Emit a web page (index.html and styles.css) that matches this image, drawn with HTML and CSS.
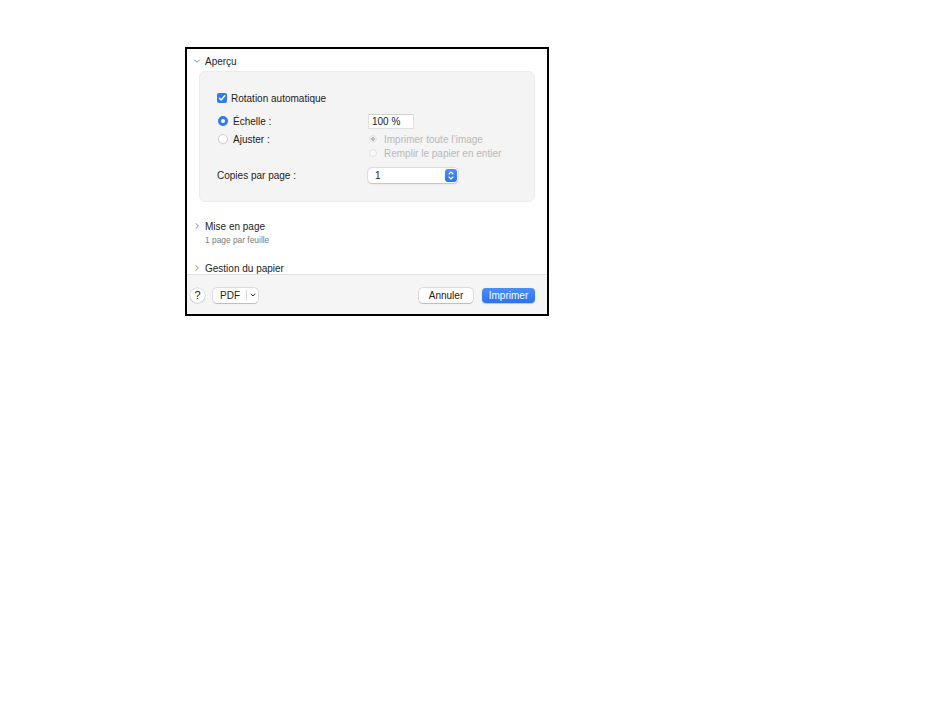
FILE: index.html
```html
<!DOCTYPE html>
<html lang="fr">
<head>
    <meta charset="UTF-8">
    <meta name="viewport" content="width=device-width, initial-scale=1.0">
    <title>Imprimer</title>
    <link rel="stylesheet" href="styles.css">
</head>
<body>
    <div class="dialog">
        <div class="options">
            <div class="section-head">
                <svg class="chevron" width="8" height="8" viewBox="0 0 8 8"><path d="M1.3 2.7 L4 5.4 L6.7 2.7" fill="none" stroke="#8a8a8a" stroke-width="1"/></svg>
                <span>Aperçu</span>
            </div>

            <div class="panel">
                <div class="row row-check">
                    <span class="checkbox">
                        <svg width="10" height="10" viewBox="0 0 10 10"><path d="M2.4 5.2 L4.2 7 L7.7 2.8" fill="none" stroke="#fff" stroke-width="1.5" stroke-linecap="round" stroke-linejoin="round"/></svg>
                    </span>
                    <span class="label">Rotation automatique</span>
                </div>

                <div class="row row-scale">
                    <div class="cell-left">
                        <span class="radio on"></span>
                        <span class="label">Échelle :</span>
                    </div>
                    <div class="field">100 %</div>
                </div>

                <div class="row row-fit">
                    <div class="cell-left">
                        <span class="radio"></span>
                        <span class="label">Ajuster :</span>
                    </div>
                    <div class="choices">
                        <div class="choice"><span class="mini-radio on"></span>Imprimer toute l’image</div>
                        <div class="choice"><span class="mini-radio"></span>Remplir le papier en entier</div>
                    </div>
                </div>

                <div class="row row-copies">
                    <div class="cell-left">
                        <span class="plain">Copies par page :</span>
                    </div>
                    <div class="select">
                        <span>1</span>
                        <span class="stepper">
                            <svg width="12" height="13" viewBox="0 0 12 13"><path d="M4 5 L6 3 L8 5 M4 8 L6 10 L8 8" fill="none" stroke="#fff" stroke-width="1.1" stroke-linecap="round" stroke-linejoin="round"/></svg>
                        </span>
                    </div>
                </div>
            </div>

            <div class="section-head collapsed">
                <svg class="chevron" width="8" height="8" viewBox="0 0 8 8"><path d="M2.7 1.3 L5.4 4 L2.7 6.7" fill="none" stroke="#8a8a8a" stroke-width="1"/></svg>
                <span>Mise en page</span>
            </div>
            <div class="section-sub">1 page par feuille</div>

            <div class="section-head collapsed last">
                <svg class="chevron" width="8" height="8" viewBox="0 0 8 8"><path d="M2.7 1.3 L5.4 4 L2.7 6.7" fill="none" stroke="#8a8a8a" stroke-width="1"/></svg>
                <span>Gestion du papier</span>
            </div>
        </div>

        <div class="footer">
            <button class="help">?</button>
            <button class="btn pdf">
                <span>PDF</span>
                <span class="divider"></span>
                <svg width="8" height="8" viewBox="0 0 8 8"><path d="M2 3 L4 5 L6 3" fill="none" stroke="#333" stroke-width="1" stroke-linecap="round"/></svg>
            </button>
            <span class="spacer"></span>
            <button class="btn">Annuler</button>
            <button class="btn primary">Imprimer</button>
        </div>
    </div>
</body>
</html>
```

FILE: styles.css
```css
/* Page */
body {
    margin: 0;
    background-color: #fff;
    font-family: 'Liberation Sans', Arial, sans-serif;
    font-size: 10px;
    color: #222;
}

/* Fenêtre d'impression (recadrée) */
.dialog {
    margin: 47px 0 0 185px;
    width: 360px;
    height: 265px;
    border: 2px solid #000;
    background-color: #fff;
    display: flex;
    flex-direction: column;
}

.options {
    flex: 1;
    overflow: hidden;
    padding-top: 5px;
}

/* En-têtes de section */
.section-head {
    display: flex;
    align-items: center;
    height: 14px;
    padding-left: 6px;
    font-size: 10px;
    color: #1d1d1d;
}

.section-head .chevron {
    margin-right: 4px;
}

.section-head.collapsed {
    margin-top: 17px;
}

.section-head.last {
    margin-top: 15px;
}

.section-sub {
    margin-top: 2px;
    padding-left: 18px;
    height: 11px;
    line-height: 11px;
    font-size: 8.4px;
    color: #7a7a7a;
}

/* Panneau gris */
.panel {
    margin: 3px 12px 0 12px;
    padding: 18px 0 18px 17px;
    background-color: #f4f4f4;
    border: 1px solid #ececec;
    border-radius: 6px;
}

.row {
    display: flex;
    align-items: center;
}

.row-check {
    height: 16px;
}

.row-scale {
    height: 16px;
    margin-top: 7px;
}

.row-fit {
    align-items: flex-start;
    margin-top: 3px;
}

.row-copies {
    height: 15px;
    margin-top: 8px;
}

.cell-left {
    width: 151px;
    display: flex;
    align-items: center;
    height: 14px;
}

.row-scale .cell-left,
.row-copies .cell-left {
    height: 16px;
}

.label {
    margin-left: 5px;
}

.row-check .label {
    margin-left: 4px;
}

/* Case à cocher */
.checkbox {
    width: 10px;
    height: 10px;
    border-radius: 2px;
    background-color: #2f7bf5;
    display: flex;
}

/* Boutons radio */
.radio {
    width: 10px;
    height: 10px;
    margin-left: 1px;
    border-radius: 50%;
    box-sizing: border-box;
    background-color: #fff;
    border: 1px solid #d4d4d4;
    box-shadow: 0 0.5px 1px rgba(0, 0, 0, 0.08);
}

.radio.on {
    border: 3px solid #2f7bf5;
    background-color: #fff;
}

.choices {
    display: flex;
    flex-direction: column;
}

.choice {
    display: flex;
    align-items: center;
    height: 14px;
    color: #b9b9b9;
}

.mini-radio {
    width: 8px;
    height: 8px;
    margin: 0 7px 0 1px;
    border-radius: 50%;
    box-sizing: border-box;
    background-color: #fafafa;
    border: 1px solid #e2e2e2;
}

.mini-radio.on {
    background: radial-gradient(circle, #bdbdbd 0 1.6px, #f2f2f2 2px);
}

/* Champ d'échelle */
.field {
    width: 46px;
    height: 15px;
    box-sizing: border-box;
    padding-left: 3px;
    line-height: 14px;
    background-color: #fff;
    border: 1px solid #e0e0e0;
    border-top-color: #d2d2d2;
}

/* Menu local */
.select {
    width: 90px;
    height: 15px;
    box-sizing: border-box;
    padding: 0 1px 0 7px;
    display: flex;
    align-items: center;
    justify-content: space-between;
    background-color: #fff;
    border-radius: 4px;
    box-shadow: 0 0 0 0.5px rgba(0, 0, 0, 0.14), 0 0.5px 1.5px rgba(0, 0, 0, 0.15);
}

.stepper {
    width: 12px;
    height: 13px;
    border-radius: 3px;
    background: linear-gradient(#4b8ef9, #2b72f1);
    display: flex;
}

/* Barre du bas */
.footer {
    height: 40px;
    border-top: 1px solid #e3e3e3;
    background-color: #f5f5f5;
    display: flex;
    align-items: center;
    padding: 1px 12px 0 2px;
    box-sizing: border-box;
}

button {
    font-family: 'Liberation Sans', Arial, sans-serif;
    font-size: 10px;
    color: #222;
    margin: 0;
    cursor: default;
}

.help {
    width: 15px;
    height: 15px;
    padding: 0;
    border-radius: 50%;
    border: none;
    background-color: #fff;
    box-shadow: 0 0 0 0.5px rgba(0, 0, 0, 0.15), 0 0.5px 1px rgba(0, 0, 0, 0.15);
    font-size: 11px;
    line-height: 15px;
    margin-left: 1px;
}

.btn {
    height: 15px;
    padding: 0;
    border: none;
    border-radius: 4px;
    background-color: #fff;
    box-shadow: 0 0 0 0.5px rgba(0, 0, 0, 0.18), 0 0.5px 1px rgba(0, 0, 0, 0.15);
    width: 54px;
    line-height: 15px;
}

.pdf {
    width: 45px;
    margin-left: 8px;
    display: flex;
    align-items: center;
    padding-left: 7px;
}

.pdf .divider {
    width: 1px;
    height: 10px;
    margin: 0 2px 0 6px;
    background-color: #d6d6d6;
}

.spacer {
    flex: 1;
}

.primary {
    width: 53px;
    margin-left: 9px;
    color: #fff;
    background: linear-gradient(#4a8ef9, #2a73f1);
    box-shadow: 0 0.5px 1px rgba(0, 0, 0, 0.2);
}
```
